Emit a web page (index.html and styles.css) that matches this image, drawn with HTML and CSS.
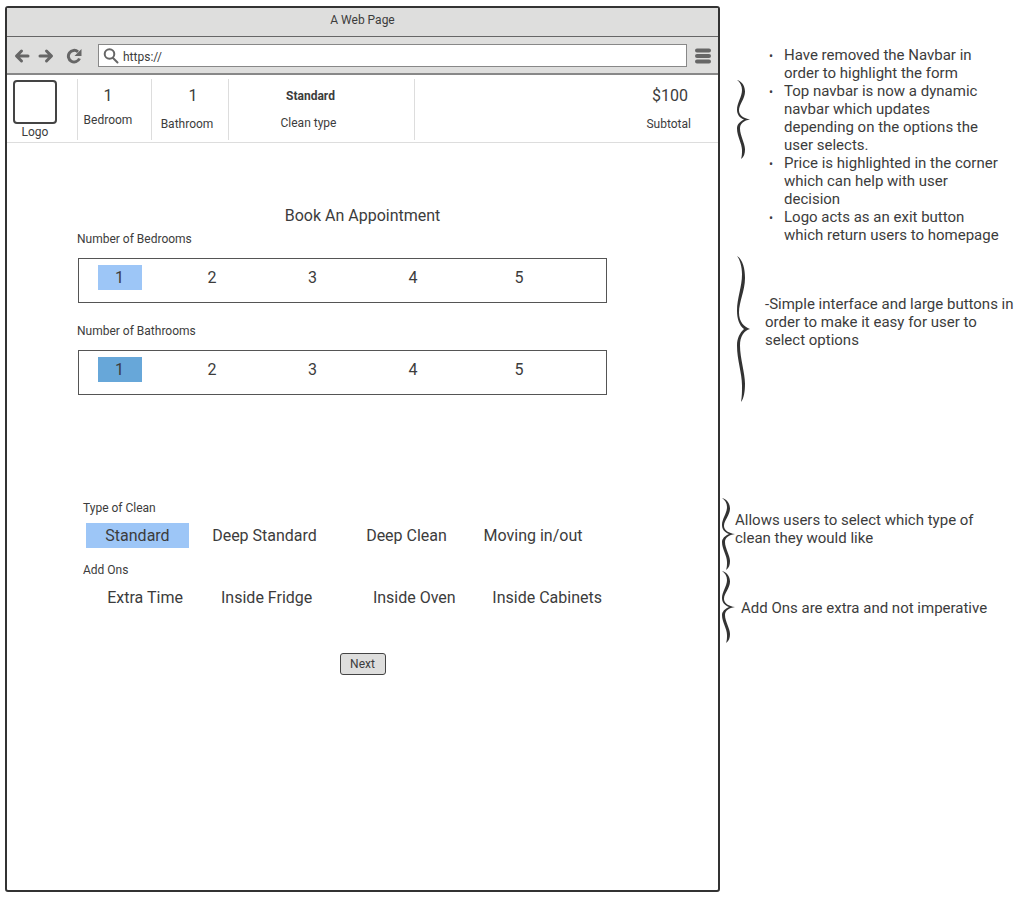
FILE: index.html
```
<!DOCTYPE html>
<html lang="en">
<head>
<meta charset="utf-8">
<meta name="viewport" content="width=device-width, initial-scale=1">
<title>Book An Appointment</title>
<link rel="stylesheet" href="styles.css">
</head>
<body>
<svg width="0" height="0" class="defs" aria-hidden="true">
  <symbol id="brace" viewBox="0 0 14 80" preserveAspectRatio="none">
    <path d="M1 0C7 2 9 7 9 12C9 19 3 25 3 31C3 36 8 39 14 40C8 41 4 44 4 49C4 56 9 64 9 70C9 74 8 78 5 80C6 77 6 74 6 71C6 64 1 57 1 49C1 45 4 42 8 40C3 38 1 34 1 30C1 23 6 17 6 10C6 6 4 2 1 0Z" fill="#333"/>
  </symbol>
</svg>
<div class="page">
  <main class="window">
    <div class="titlebar">A Web Page</div>
    <div class="toolbar">
      <button class="tool" aria-label="Back"><svg width="16" height="16" viewBox="0 0 16 16"><path d="M7.500 3L2.500 8L7.500 13M3 8H14" /></svg></button>
      <button class="tool" aria-label="Forward"><svg width="16" height="16" viewBox="0 0 16 16"><path d="M8.500 3L13.500 8L8.500 13M13 8H2" /></svg></button>
      <button class="tool reload" aria-label="Reload"><svg width="16" height="16" viewBox="0 0 16 16"><path class="arc" d="M13.500 10.500A5.800 5.800 0 1 1 12 3.800" /><path class="head" d="M15.500 1V8H8.500Z" /></svg></button>
      <label class="address">
        <svg width="16" height="16" viewBox="0 0 16 16" aria-hidden="true"><circle cx="6.500" cy="6" r="4.800"/><path d="M10 10L14.500 14.500"/></svg>
        <input type="text" value="https://" aria-label="Address">
      </label>
      <button class="tool menu" aria-label="Menu"><svg width="16" height="16" viewBox="0 0 16 16"><path d="M2 2.500H14M2 8H14M2 13.500H14"/></svg></button>
    </div>
    <header class="summary">
      <a class="logo" href="#"><span class="logo-box"></span><span class="logo-text">Logo</span></a>
      <div class="fact bedroom"><span class="value">1</span><span class="name">Bedroom</span></div>
      <div class="fact bathroom"><span class="value">1</span><span class="name">Bathroom</span></div>
      <div class="fact clean"><strong class="value">Standard</strong><span class="name">Clean type</span></div>
      <div class="fact total"><span class="value">$100</span><span class="name">Subtotal</span></div>
    </header>
    <form class="booking">
      <h1 class="title">Book An Appointment</h1>
      <h2 class="label" id="bedrooms">Number of Bedrooms</h2>
      <div class="numbers" role="group" aria-labelledby="bedrooms">
        <button type="button" class="option selected" aria-pressed="true">1</button>
        <button type="button" class="option">2</button>
        <button type="button" class="option">3</button>
        <button type="button" class="option">4</button>
        <button type="button" class="option">5</button>
      </div>
      <h2 class="label second" id="bathrooms">Number of Bathrooms</h2>
      <div class="numbers" role="group" aria-labelledby="bathrooms">
        <button type="button" class="option selected strong" aria-pressed="true">1</button>
        <button type="button" class="option">2</button>
        <button type="button" class="option">3</button>
        <button type="button" class="option">4</button>
        <button type="button" class="option">5</button>
      </div>
      <div class="extras">
        <h2 class="label" id="types">Type of Clean</h2>
        <div class="types" role="group" aria-labelledby="types">
          <button type="button" class="option selected" aria-pressed="true">Standard</button>
          <button type="button" class="option">Deep Standard</button>
          <button type="button" class="option">Deep Clean</button>
          <button type="button" class="option">Moving in/out</button>
        </div>
        <h2 class="label" id="addons">Add Ons</h2>
        <div class="types addons" role="group" aria-labelledby="addons">
          <button type="button" class="option">Extra Time</button>
          <button type="button" class="option">Inside Fridge</button>
          <button type="button" class="option">Inside Oven</button>
          <button type="button" class="option">Inside Cabinets</button>
        </div>
      </div>
      <button type="submit" class="next">Next</button>
    </form>
  </main>
  <aside class="notes">
    <section class="note navbar-note">
      <svg class="brace" aria-hidden="true"><use href="#brace"/></svg>
      <ul class="points">
        <li>Have removed the Navbar in<br>order to highlight the form</li>
        <li>Top navbar is now a dynamic<br>navbar which updates<br>depending on the options the<br>user selects.</li>
        <li>Price is highlighted in the corner<br>which can help with user<br>decision</li>
        <li>Logo acts as an exit button<br>which return users to homepage</li>
      </ul>
    </section>
    <section class="note options-note">
      <svg class="brace" aria-hidden="true"><use href="#brace"/></svg>
      <p>-Simple interface and large buttons in<br>order to make it easy for user to<br>select options</p>
    </section>
    <section class="note type-note">
      <svg class="brace" aria-hidden="true"><use href="#brace"/></svg>
      <p>Allows users to select which type of<br>clean they would like</p>
    </section>
    <section class="note addon-note">
      <svg class="brace" aria-hidden="true"><use href="#brace"/></svg>
      <p>Add Ons are extra and not imperative</p>
    </section>
  </aside>
</div>
</body>
</html>
```
FILE: styles.css
```
* { box-sizing: border-box; }
body {
  margin: 0;
  background: #fff;
  color: #3c3c3c;
  font: 12px/16px Roboto, "Liberation Sans", sans-serif;
}
h1, h2, p, ul { margin: 0; padding: 0; font-weight: 400; }
button, input { font: inherit; color: inherit; }
button { border: 0; background: none; padding: 0; }
.defs { display: block; }
.page {
  display: grid;
  grid-template-columns: minmax(0, 715fr) minmax(0, 304fr);
  min-height: 100vh;
  padding: 6px 0 14px 5px;
}
.window { border: 2px solid #333; border-radius: 3px; }
.titlebar {
  height: 29px;
  padding-top: 4px;
  background: #dededd;
  border-bottom: 1px solid #666;
  text-align: center;
}
.toolbar {
  display: flex;
  align-items: center;
  gap: 8px;
  height: 38px;
  padding: 1px 7px 0;
  background: #dededd;
  border-bottom: 2px solid #888;
}
.tool { display: flex; }
.tool svg { fill: none; stroke: #666; stroke-width: 3; stroke-linecap: round; stroke-linejoin: round; }
.tool .arc { stroke-linecap: butt; }
.tool .head { fill: #666; stroke: none; }
.reload { margin: 0 8px 0 4px; }
.menu { margin-left: 1px; }
.toolbar .menu svg { stroke-width: 4; }
.address {
  flex: 1;
  display: flex;
  align-items: center;
  gap: 4px;
  height: 23px;
  margin-right: -1px;
  padding: 0 4px;
  background: #fff;
  border: 1px solid #888;
}
.address svg { fill: none; stroke: #666; stroke-width: 2; stroke-linecap: round; }
.address input { flex: 1; min-width: 0; border: 0; padding: 2px 0 0; background: none; outline: 0; }
.summary {
  display: grid;
  grid-template-columns: 70fr 74fr 77fr 186fr 304fr;
  height: 68px;
  padding: 4px 0 5px;
  border-bottom: 1px solid #ddd;
}
.logo {
  display: flex;
  flex-direction: column;
  align-items: flex-start;
  padding: 1px 0 0 6px;
  color: inherit;
  text-decoration: none;
}
.logo-box { width: 44px; height: 44px; border: 2px solid #444; border-radius: 4px; }
.logo-text { width: 44px; text-align: center; }
.fact {
  display: flex;
  flex-direction: column;
  align-items: center;
  gap: 11px;
  padding-top: 8px;
  border-left: 1px solid #ddd;
}
.fact .value { font-size: 16px; line-height: 18px; }
.fact.clean .value { padding-left: 4px; font-size: 12px; }
.fact.bedroom { gap: 7px; padding-right: 13px; }
.bathroom { padding-right: 6px; }
.bathroom .value { padding-left: 12px; }
.clean { gap: 10px; padding-right: 26px; }
.total { align-items: flex-end; padding-right: 27px; }
.total .value { padding-right: 3px; }
.booking { display: flex; flex-direction: column; padding: 64px 111px 0 70px; }
.title { align-self: center; margin-left: 41px; font-size: 16px; line-height: 18px; }
.label { margin-top: 6px; font-size: 12px; line-height: 16px; }
.label.second { margin-top: 20px; }
.numbers {
  display: grid;
  grid-template-columns: 81fr 104fr 97fr 104fr 108fr 33fr;
  justify-items: center;
  height: 45px;
  margin: 11px 0 0 1px;
  padding-top: 6px;
  border: 1px solid #555;
}
.option { height: 25px; font-size: 16px; line-height: 24px; white-space: nowrap; }
.numbers .option { width: 44px; }
.selected { background: #9dc6f7; }
.selected.strong { background: #67a7d9; }
.extras { padding: 91px 0 0 6px; }
.types {
  display: grid;
  grid-template-columns: 103fr 151fr 133fr 120fr 14fr;
  justify-items: center;
  margin: 7px 0 0 3px;
}
.types .selected { width: 100%; }
.addons { grid-template-columns: 104fr 139fr 156fr 103fr 13fr; padding-left: 7px; margin-right: -8px; }
.extras .label { margin-top: 14px; }
.next {
  align-self: center;
  width: 46px;
  height: 22px;
  margin: 43px 0 0 41px;
  background: #dededd;
  border: 1px solid #444;
  border-radius: 3px;
}
.notes { padding: 40px 0 0; font-size: 15px; line-height: 18px; white-space: nowrap; }
.note { display: flex; align-items: flex-start; }
.brace { flex: none; width: 14px; height: 72px; }
.navbar-note { padding-left: 16px; }
.navbar-note .brace { height: 79px; margin-top: 34px; }
.points { padding-left: 34px; list-style: none; }
.points li { display: block; }
.points li::before { content: "•"; display: inline-block; width: 15px; margin-left: -15px; font-size: 12px; line-height: 12px; }
.options-note { margin-top: 12px; padding-left: 16px; gap: 15px; }
.options-note .brace { height: 146px; }
.options-note p { padding-top: 39px; }
.type-note { margin-top: 96px; padding-left: 1px; }
.type-note p { padding-top: 13px; }
.addon-note { margin-top: 1px; padding-left: 1px; gap: 6px; }
.addon-note p { padding-top: 28px; }
```
